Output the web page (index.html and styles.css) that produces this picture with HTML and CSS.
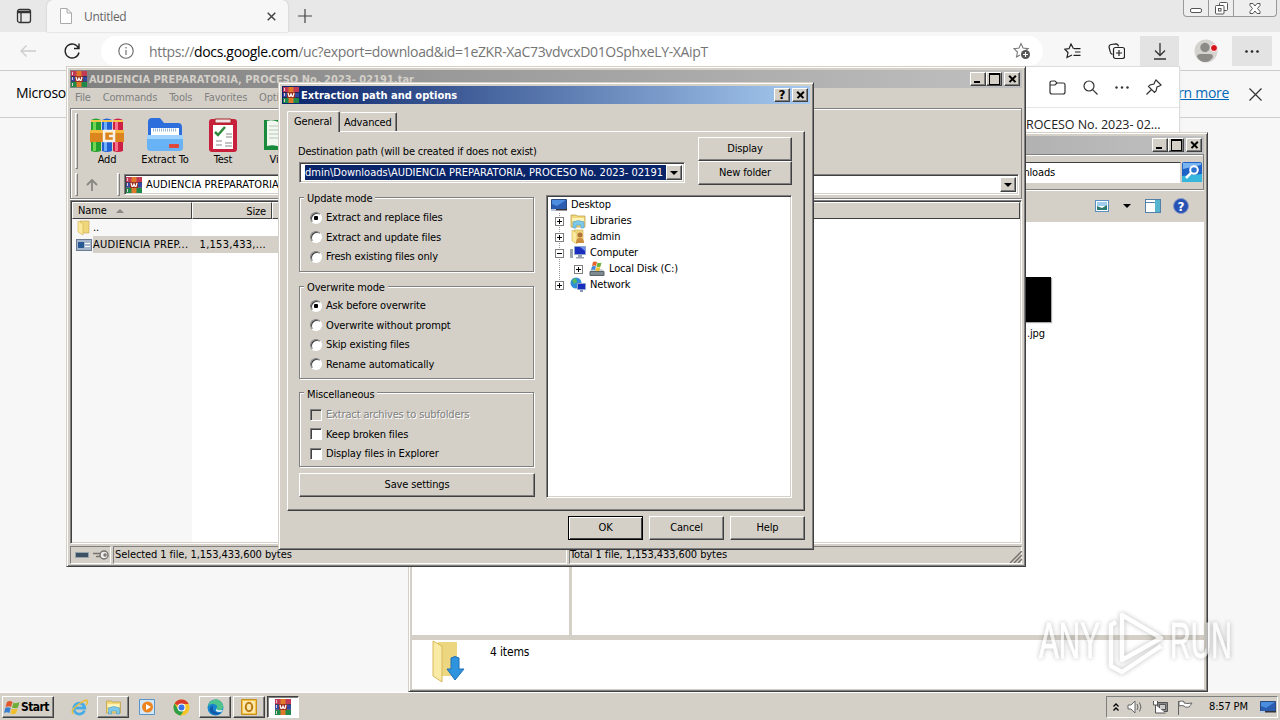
FILE: index.html
```html
<!DOCTYPE html>
<html lang="en">
<head>
    <meta charset="UTF-8">
    <title>Desktop</title>
    <link rel="stylesheet" href="styles.css">
</head>
<body>
    <svg width="0" height="0" class="defs">
        <symbol id="rar" viewBox="0 0 16 16">
            <path fill="#c23a55" d="M0 0h16v5H0z"/>
            <path fill="#3348a0" d="M0 5.500h16v5H0z"/>
            <path fill="#1f8a4a" d="M0 11h16v5H0z"/>
            <path fill="#2c1c30" d="M0 5h16v.7H0zM0 10.400h16v.7H0z"/>
            <path fill="#e07a28" d="M5.500 0h5v16h-5z"/>
            <path fill="#9c3020" d="M4 5h8v6H4z"/>
            <path fill="none" stroke="#fff" stroke-width="1.200" d="M5 6l1 3.500h1L8 7l1 2.500h1L11 6"/>
            <path fill="#e8c8d0" d="M1 1h1v3H1zM1 6h1v3H1zM1 12h1v3H1z"/>
        </symbol>
        <symbol id="folder" viewBox="0 0 16 16">
            <path fill="#efd77c" stroke="#c9a545" stroke-width=".6" d="M4 1h9v12H4z"/>
            <path fill="#fbe99c" stroke="#d3b04e" stroke-width=".6" d="M2 1l5 3v11l-5-3z"/>
        </symbol>
        <symbol id="lib" viewBox="0 0 16 16">
            <path fill="#f2d878" stroke="#b99a44" stroke-width=".7" d="M1 2h5l1 1h8v11H1z"/>
            <path fill="#fff4b8" d="M2 5h12v3H2z"/>
            <path fill="#7ec9ea" stroke="#4d9fc9" stroke-width=".6" d="M3 15V9q5-3 11 0v6h-3v-3H6v3z"/>
        </symbol>
        <symbol id="desk" viewBox="0 0 16 16">
            <path fill="#2a5cb0" stroke="#2b4a80" d="M.5 2.500h15v10H.5z"/>
            <path fill="#4b8ee0" d="M1 3h14L6 9l-5-2z"/>
            <path fill="#b9cbe0" d="M0 12h5v2H0z"/>
            <path fill="#333" d="M5 12h11v1.500H5z"/>
        </symbol>
        <symbol id="drop" viewBox="0 0 8 4"><path d="M0 0h8L4 4z"/></symbol>
    </svg>

    <!-- browser -->
    <div class="browser">
        <div class="tabbar">
            <div class="tab-actions">
                <svg width="16" height="16" fill="none" stroke="#333" stroke-width="1.300"><rect x="1.500" y="1.500" width="13" height="13" rx="2"/><path d="M2 4h12" stroke-width="2.500"/><path d="M5 5v9"/></svg>
            </div>
            <div class="tab">
                <svg width="12" height="16" fill="#fff" stroke="#aaa"><path d="M.5.5h6.500l4.500 4.500v10.500H.5zM7 .5V5h4.500"/></svg>
                <span>Untitled</span>
                <svg width="9" height="9" stroke="#444" stroke-width="1.500"><path d="M.7.7l7.600 7.600M8.300.7L.7 8.300"/></svg>
            </div>
            <svg class="newtab" width="14" height="14" stroke="#444" stroke-width="1.200"><path d="M7 0v14M0 7h14"/></svg>
            <div class="winbtns">
                <span><svg width="12" height="6" fill="#fff" stroke="#555"><rect x=".5" y="1.500" width="11" height="4" rx="1.500"/></svg></span>
                <span><svg width="13" height="13" fill="#fff" stroke="#555"><rect x="4.500" y=".5" width="8" height="8" rx="1"/><rect x=".5" y="3.500" width="8.500" height="8.500" rx="1"/><rect x="3.500" y="6.500" width="2.500" height="2.500"/></svg></span>
                <span><svg width="12" height="11" fill="#fff" stroke="#555"><path d="M1 .5h3l2 2.500 2-2.500h3v2L8.500 5.500 11 8.500v2H8L6 8l-2 2.500H1v-2l2.500-3L1 2.500z"/></svg></span>
            </div>
        </div>
        <div class="navbar">
            <svg class="back" width="16" height="12" fill="none" stroke="#ccc" stroke-width="1.300"><path d="M16 6H1M6.500.5L1 6l5.500 5.500"/></svg>
            <svg class="reload" width="18" height="17" fill="none" stroke="#222" stroke-width="1.400"><path d="M14.500 5A7 7 0 1 0 15 9.500M15 .5V5.500h-5"/></svg>
            <div class="address">
                <svg width="16" height="16" fill="none" stroke="#666" stroke-width="1.100"><circle cx="8" cy="8" r="7.200"/><path d="M8 7v5M8 4v1.500"/></svg>
                <span class="url">https://<b>docs.google.com</b>/uc?export=download&amp;id=1eZKR-XaC73vdvcxD01OSphxeLY-XAipT</span>
                <svg width="18" height="18" fill="none" stroke="#777" stroke-width="1.100"><path d="M7 13l-3.500 2 1-5L1 6.700l5-.6L8 1.500l2.100 4.600 5 .6L12 9"/><circle cx="12.500" cy="12.500" r="4.500" fill="#555" stroke="none"/><path stroke="#fff" d="M12.500 10v5M10 12.500h5"/></svg>
            </div>
            <div class="nav-icons">
                <svg width="17" height="17" fill="none" stroke="#222" stroke-width="1.200"><path d="M9.500 5.700L7 1 5 5.700.8 6.200 4 9.500l-1 5L8 12M10 5.700h6.500M11 9h5.500M9.500 12.300h7"/></svg>
                <svg width="17" height="17" fill="none" stroke="#222" stroke-width="1.200"><path d="M4.500 11.500Q2.500 11 2 8L1 4q0-2 2-2.500L8 .8q2 0 2.500 2.500"/><rect x="5.500" y="4.500" width="11" height="11" rx="2"/><path d="M11 7v6M8 10h6"/></svg>
                <div class="hot"><svg width="14" height="17" fill="none" stroke="#333" stroke-width="1.300"><path d="M7 0v12M2 7.500l5 5 5-5M1 16h12"/></svg></div>
                <svg width="24" height="24"><circle cx="12" cy="12" r="11.500" fill="#d5d3d0"/><circle cx="11" cy="8.500" r="4.700" fill="#8d8b88"/><path fill="#8d8b88" d="M3 18q0-3 3-3h10q3 0 3 3-3 5-8 5t-8-5"/><circle cx="20" cy="9" r="3.500" fill="#d8121b" stroke="#fff"/></svg>
                <div class="hot more"><svg width="14" height="3" fill="#222"><circle cx="1.500" cy="1.500" r="1.300"/><circle cx="7" cy="1.500" r="1.300"/><circle cx="12.500" cy="1.500" r="1.300"/></svg></div>
            </div>
        </div>
        <div class="infobar">
            <span class="ms">Microsoft Edge</span>
            <a class="learn">Learn more</a>
            <svg width="13" height="13" stroke="#333" stroke-width="1.200"><path d="M.5.5l12 12M12.500.5l-12 12"/></svg>
        </div>
    </div>

    <!-- downloads flyout -->
    <div class="flyout">
        <div class="flyout-head">
            <svg width="17" height="15" fill="none" stroke="#333" stroke-width="1.200"><path d="M1 12V3q0-2 2-2h3l2 2h6q2 0 2 2v7q0 2-2 2H3q-2 0-2-2M1 5h5l2-2"/></svg>
            <svg width="15" height="15" fill="none" stroke="#333" stroke-width="1.200"><circle cx="6" cy="6" r="5"/><path d="M9.700 9.700l4.800 4.800"/></svg>
            <svg width="14" height="3" fill="#333"><circle cx="1.500" cy="1.500" r="1.200"/><circle cx="7" cy="1.500" r="1.200"/><circle cx="12.500" cy="1.500" r="1.200"/></svg>
            <svg width="16" height="16" fill="none" stroke="#333" stroke-width="1.200"><path d="M10 1l5 5-1.500 1L11 8l-1 4-1.500 1.500-6-6L4 6l4-1 1-2.500zM5.500 10.500L.5 15.500"/></svg>
        </div>
        <div class="flyout-item">ROCESO No. 2023- 02...</div>
    </div>

    <!-- explorer window -->
    <div class="window explorer">
        <div class="titlebar inactive">
            <div class="capbtns"><i class="cap min"></i><i class="cap max"></i><i class="cap close"></i></div>
        </div>
        <div class="ex-search">
            <div class="ex-field">Search Downloads</div>
            <svg width="20" height="20"><rect width="20" height="20" rx="2" fill="#1e62c8"/><path fill="#36b6dd" d="M0 14l20-2v8H0z"/><path fill="#7ab5f0" d="M1 1h18v2L1 7z"/><circle cx="12" cy="8" r="3.800" fill="#2a73d0" stroke="#fff" stroke-width="2"/><path stroke="#fff" stroke-width="2.500" d="M9 11l-5 5"/></svg>
        </div>
        <div class="ex-tools">
            <svg width="14" height="12"><rect x=".5" y=".5" width="13" height="11" fill="#fff" stroke="#5a8fc0"/><path fill="#9fcdee" d="M2 2h10v4H2z"/><path fill="#2e7a71" d="M2 6l5 2 5-3v5H2z"/></svg>
            <svg width="8" height="4"><use href="#drop"/></svg>
            <svg width="16" height="14"><rect x=".5" y=".5" width="15" height="13" fill="#fff" stroke="#5580a8"/><path fill="#55b5cf" d="M10 1h5v12h-5z"/><path stroke="#5580a8" d="M1 3.500h9"/></svg>
            <svg width="16" height="16"><circle cx="8" cy="8" r="7.500" fill="#2851b4" stroke="#8798c8"/><text x="8" y="12.500" text-anchor="middle" class="help-q">?</text></svg>
        </div>
        <div class="ex-body">
            <div class="ex-nav"></div>
            <div class="ex-files">
                <div class="thumb"></div>
                <div class="fname">.jpg</div>
            </div>
        </div>
        <div class="ex-details">
            <svg width="38" height="44"><path fill="#ecd67f" d="M8 2h19v34H8z"/><path fill="#f9eaa5" stroke="#d8b75a" d="M3 1l9 5v36l-9-6z"/><path fill="#2f94dd" stroke="#1c70b8" d="M21 18q4-3 8 0v11h5l-9 11-8-11h4z"/></svg>
            <span>4 items</span>
        </div>
    </div>

    <!-- archive window -->
    <div class="window archiver">
        <div class="titlebar inactive">
            <svg width="16" height="16"><use href="#rar"/></svg>
            <span>AUDIENCIA PREPARATORIA, PROCESO No. 2023- 02191.tar</span>
            <div class="capbtns"><i class="cap min"></i><i class="cap max"></i><i class="cap close"></i></div>
        </div>
        <div class="menu"><span>File</span><span>Commands</span><span>Tools</span><span>Favorites</span><span>Options</span></div>
        <div class="bars">
            <div class="bar tools">
                <i class="grip"></i>
                <div class="tool"><svg width="36" height="36">
                    <path fill="#24a02f" d="M2 3q5-3 10 0v31q-5 2-10 0z"/><path fill="#73d653" d="M4 3h3v31H4z"/>
                    <path fill="#1f62d6" d="M13 3q5-3 10 0v31q-5 2-10 0z"/><path fill="#6fb1f8" d="M15 3h3v31h-3z"/>
                    <path fill="#cf1e43" d="M24 3q5-3 10 0v31q-5 2-10 0z"/><path fill="#f4738c" d="M26 3h3v31h-3z"/>
                    <path fill="#f5c64a" d="M2 3h10v2H2zM13 3h10v2H13zM24 3h10v2H24z"/>
                    <path fill="#dc841d" d="M1 13h34v12H1z"/><path fill="#f6b93d" d="M1 13h34v3H1z"/>
                    <path fill="none" stroke="#f6f0e6" stroke-width="2.500" d="M15 14h10v10H15zM20 19h6"/></svg>Add</div>
                <div class="tool"><svg width="38" height="36">
                    <path fill="#2c6fdc" d="M2 5q0-4 4-4h8l4 5h14q4 0 4 4v20H2z"/><path fill="#fff" d="M5 11h28v10H5z"/><path stroke="#9db8d8" stroke-dasharray="1 1" stroke-width="3" d="M7 13h24"/>
                    <path fill="#68b2f6" d="M1 18h36v13q0 3-4 3H5q-4 0-4-3z"/><path fill="#9fd2ff" d="M1 18h36v4H1z"/><rect x="23" y="27" width="10" height="4" rx="1" fill="#e0483c"/></svg>Extract To</div>
                <div class="tool"><svg width="30" height="36">
                    <rect x="1" y="2" width="28" height="33" rx="3" fill="#c8203c"/><path fill="#fff" d="M5 8h20v24H5z"/><path fill="#f0e4e8" stroke="#a22" d="M7 2h16v4H7z"/>
                    <path fill="none" stroke="#2c8a3c" stroke-width="2.500" d="M7 15l3 3 7-8"/><path stroke="#888" stroke-width="1.200" d="M18 17h6M18 20h6M8 24h6M8 28h6M17 26h7M17 29h7"/></svg>Test</div>
                <div class="tool"><svg width="34" height="36">
                    <path fill="#178a3c" d="M0 3h34v30H0z"/><path fill="#f2f7f0" d="M3 4q7-2 13 2v24q-6-3-13-1zM31 4q-7-2-13 2v24q6-3 13-1z"/><path stroke="#b6c6b8" d="M5 9h9M5 13h9M5 17h9M5 21h9"/></svg>View</div>
            </div>
            <div class="bar path">
                <i class="grip"></i>
                <svg class="up" width="12" height="12" fill="none" stroke="#8a8680" stroke-width="1.800"><path d="M6 12V1M1 6l5-5 5 5"/></svg>
                <i class="grip"></i>
                <div class="combo">
                    <svg width="16" height="16"><use href="#rar"/></svg>
                    <span>AUDIENCIA PREPARATORIA, PROCESO No. 2023- 02191.tar</span>
                    <i class="dropbtn"><svg width="8" height="4"><use href="#drop"/></svg></i>
                </div>
            </div>
        </div>
        <div class="list">
            <div class="list-head">
                <span class="c-name">Name <svg width="8" height="4" fill="#8a8680"><path d="M0 4h8L4 0z"/></svg></span>
                <span class="c-size">Size</span>
                <span class="c-rest"></span>
            </div>
            <div class="list-body">
                <div class="list-row"><span class="c-name"><svg width="16" height="16"><use href="#folder"/></svg>..</span></div>
                <div class="list-row sel"><span class="c-name"><svg width="16" height="14"><rect x=".5" y="1.500" width="15" height="11" fill="#a8b8cc" stroke="#6a7a90"/><path fill="#2a5a94" d="M2 4h6v6H2z"/><path stroke="#fff" d="M9 5.500h5M9 8.500h5"/></svg><em>AUDIENCIA PREP...</em></span><span class="c-size">1,153,433,...</span></div>
            </div>
        </div>
        <div class="status">
            <div class="s-icons">
                <svg width="14" height="6"><path fill="#3c5264" stroke="#96a4ae" d="M.5.500h13v5H.5z"/></svg>
                <svg width="17" height="10" fill="none" stroke="#77736e" stroke-width="1.500"><circle cx="12" cy="5" r="4" fill="#eee"/><circle cx="13" cy="5" r="1"/><path d="M8 3.500H1M8 6.500H4"/></svg>
            </div>
            <div class="s-left">Selected 1 file, 1,153,433,600 bytes</div>
            <div class="s-right">Total 1 file, 1,153,433,600 bytes</div>
            <svg class="sizer" width="12" height="12" stroke="#77736c" stroke-width="1.500"><path d="M0 12L12 0M4 12l8-8M8 12l4-4"/></svg>
        </div>
    </div>

    <!-- extraction dialog -->
    <div class="window dialog">
        <div class="titlebar active">
            <svg width="16" height="16"><use href="#rar"/></svg>
            <span>Extraction path and options</span>
            <div class="capbtns"><i class="cap ask">?</i><i class="cap close"></i></div>
        </div>
        <div class="tabs"><span class="on">General</span><span>Advanced</span></div>
        <div class="panel">
            <div class="dest">
                <div class="dest-left">
                    <label>Destination path (will be created if does not exist)</label>
                    <div class="combo">
                        <span class="picked">dmin\Downloads\AUDIENCIA PREPARATORIA, PROCESO No. 2023- 02191</span>
                        <i class="dropbtn"><svg width="8" height="4"><use href="#drop"/></svg></i>
                    </div>
                </div>
                <div class="dest-right">
                    <div class="btn">Display</div>
                    <div class="btn">New folder</div>
                </div>
            </div>
            <div class="main">
                <div class="options">
                    <div class="group g-update">
                        <h4>Update mode</h4>
                        <p><i class="radio on"></i>Extract and replace files</p>
                        <p><i class="radio"></i>Extract and update files</p>
                        <p><i class="radio"></i>Fresh existing files only</p>
                    </div>
                    <div class="group g-over">
                        <h4>Overwrite mode</h4>
                        <p><i class="radio on"></i>Ask before overwrite</p>
                        <p><i class="radio"></i>Overwrite without prompt</p>
                        <p><i class="radio"></i>Skip existing files</p>
                        <p><i class="radio"></i>Rename automatically</p>
                    </div>
                    <div class="group g-misc">
                        <h4>Miscellaneous</h4>
                        <p class="off"><i class="check"></i>Extract archives to subfolders</p>
                        <p><i class="check"></i>Keep broken files</p>
                        <p><i class="check"></i>Display files in Explorer</p>
                    </div>
                    <div class="btn">Save settings</div>
                </div>
                <div class="tree">
                    <div class="node"><svg width="16" height="16"><use href="#desk"/></svg>Desktop</div>
                    <div class="branch">
                        <div class="node l1"><i class="exp plus"></i><svg width="16" height="16"><use href="#lib"/></svg>Libraries</div>
                        <div class="node l1"><i class="exp plus"></i><svg width="16" height="16"><use href="#folder"/><circle cx="10" cy="6" r="2.500" fill="#b0713a"/><path fill="#c98b3e" d="M6 14q0-5 4-5t4 5z"/></svg>admin</div>
                        <div class="node l1"><i class="exp"></i><svg width="16" height="16"><path fill="#9aa4ae" d="M0 4h3v9H0z"/><path fill="#1a2fc0" stroke="#8fa4c8" d="M4.500 1.500h11v8h-11z"/><path fill="#6d8cf0" d="M10 2h5v4z"/><path fill="#98a2b0" d="M8 10h4v2h2v1.500H6V12h2z"/></svg>Computer</div>
                        <div class="node l2"><i class="exp plus"></i><svg width="16" height="16"><path fill="#7f8a90" stroke="#56646c" d="M1 10.500h14v4H1z"/><path fill="#c8d2d6" d="M2 8h11l2 2H1z"/><path fill="#e2642a" d="M4 1q2-1 4 0L7 5q-2-1-4 0z"/><path fill="#6cb33a" d="M8.500 1.500q2 1 4 0l-1 4q-2 1-4 0z"/><path fill="#3f86d8" d="M3 5.500q2-1 4 0L6 9q-2-1-4 0z"/><path fill="#f0c030" d="M7.500 6q2 1 4 0l-1 3.500q-2 1-4 0z"/></svg>Local Disk (C:)</div>
                        <div class="node l1"><i class="exp plus"></i><svg width="16" height="16"><circle cx="6" cy="6" r="5.500" fill="#2e8fd8"/><path fill="#55bb60" d="M2 3l4-2 1 4-3 2zM7 7l4-1-2 4z"/><path fill="#1530c0" stroke="#8fa4c8" d="M7.500 6.500h8v6h-8z"/><path fill="#8898b8" d="M10 13h3v2h-3z"/></svg>Network</div>
                    </div>
                </div>
            </div>
        </div>
        <div class="dlg-btns"><div class="btn default">OK</div><div class="btn">Cancel</div><div class="btn">Help</div></div>
    </div>

    <!-- taskbar -->
    <div class="taskbar">
        <div class="start">
            <svg width="16" height="15"><path fill="#e0562a" d="M3 2q3-2 5.500 0L7 7Q5 5.500 1.500 7z"/><path fill="#6fae36" d="M9.500 2.500Q12 4 15.500 2L14 7.500Q11 9 8 7.500z"/><path fill="#3a7fd0" d="M1.200 8Q4 6.500 6.700 8L5.500 13Q3 11.500 0 13z"/><path fill="#efc02c" d="M7.700 8.500Q10.500 10 13.700 8.500L12 13.500Q9 15 6.500 13.500z"/></svg>
            Start
        </div>
        <div class="quick">
            <span><svg width="17" height="17" fill="none"><path stroke="#4aace4" stroke-width="2.800" d="M13.500 11.500A5.500 5.500 0 1 1 13.800 9H4"/><path stroke="#e8bf3c" stroke-width="1.500" d="M2 15Q-1 11 8 5t8-3q1 2-1 4"/></svg></span>
            <span class="task"><svg width="17" height="16"><use href="#lib"/></svg></span>
            <span><svg width="16" height="16"><path fill="#d4e7f6" stroke="#5b94c4" d="M.5.5h15v15H.5z"/><circle cx="8.500" cy="8" r="5.500" fill="#ee8420"/><path fill="#fff" d="M7 5l5 3-5 3z"/></svg></span>
            <span><svg width="17" height="17"><circle cx="8.500" cy="8.500" r="8" fill="#f5c428"/><path fill="#d93a2c" d="M8.500 8.500L1.600 4.500a8 8 0 0 1 14 .5H8.500z"/><path fill="#2f9e48" d="M1.600 4.500a8 8 0 0 0 6 12l3.500-5.500H5.500z"/><circle cx="8.500" cy="8.500" r="4" fill="#fff"/><circle cx="8.500" cy="8.500" r="3" fill="#3a74e8"/></svg></span>
            <span class="task"><svg width="17" height="17"><circle cx="8.500" cy="8.500" r="8" fill="#1786cf"/><path fill="#4fc48c" d="M3 3q7-6 12 1 3 5-1 7-3 1-5-1 3-4-2-5-4-1-6 3 0-3 2-5"/><path fill="#1458a8" d="M6 7q-2 7 8 7-4 3-8 1T3 9q1-2 3-2"/><path fill="#e8f4f8" d="M9 10q2 2 6 1l1 1q-4 2-7 0z"/></svg></span>
            <span class="task"><svg width="17" height="17"><path fill="#f3c346" stroke="#c98f1d" d="M.5.5h15v15H.5z"/><path fill="#fbe7ac" d="M2 2h12v12H2z"/><ellipse cx="8" cy="8" rx="3.200" ry="4.200" fill="none" stroke="#b87a10" stroke-width="2"/></svg></span>
            <span class="task down"><svg width="16" height="16"><use href="#rar"/></svg></span>
        </div>
        <div class="tray">
            <svg width="6" height="9" fill="none" stroke="#000" stroke-width="1.300"><path d="M.5 3.500L3 1l2.500 2.500M.5 7.500L3 5l2.500 2.500"/></svg>
            <svg width="17" height="14" fill="#fff" stroke="#666"><path d="M1 5h3l4-4v12L4 9H1z"/><path fill="none" d="M10 4q2 3 0 6M12.500 2.500q3 4.500 0 9"/></svg>
            <svg width="17" height="15" fill="#fff" stroke="#555"><path fill="#888" d="M5.500 2.500h10v9h-10z"/><path fill="#ccc" d="M7.500 4.500h6v5h-6z"/><path d="M1.500 1v4h4V1M3.500 5v8h10"/></svg>
            <svg width="16" height="15" fill="#fff" stroke="#666"><path d="M1.500 15V1M2 1.500q3-1 5 0V3q4 1 8 0-2 3-3 4-4 1-5-1-2-1-5 0z"/></svg>
            <span>8:57 PM</span>
            <svg width="16" height="16"><use href="#desk"/></svg>
        </div>
    </div>

    <svg class="watermark" width="220" height="76">
        <text x="7" y="52" textLength="61" lengthAdjust="spacingAndGlyphs">ANY</text>
        <text x="138" y="52" textLength="62" lengthAdjust="spacingAndGlyphs">RUN</text>
        <path d="M90 9v45l39-22zM84 16l-5 3v41l11 6 39-26"/>
    </svg>
</body>
</html>
```
FILE: styles.css
```css
* {
    box-sizing: border-box;
}

body {
    margin: 0;
    width: 1280px;
    height: 720px;
    overflow: hidden;
    position: relative;
    background: #f7f7f7;
    color: #000;
    font: 11px/14px "DejaVu Sans Condensed", "DejaVu Sans", sans-serif;
    letter-spacing: -0.15px;
    white-space: nowrap;
}

svg {
    flex: none;
    display: block;
}

.defs {
    position: absolute;
}

i, em {
    font-style: normal;
}

/* browser */
.tabbar {
    display: flex;
    height: 32px;
    background: #e8e8e8;
}

.tab-actions {
    width: 47px;
    padding: 8px 0 0 16px;
}

.tab {
    width: 241px;
    background: #f7f7f7;
    border-radius: 6px 6px 0 0;
    box-shadow: 0 0 2px #bbb;
    display: flex;
    align-items: center;
    padding: 0 12px 0 13px;
    font: 12px "Open Sans", sans-serif;
    letter-spacing: -0.3px;
    color: #666;
}

.tab span {
    flex: 1;
    margin-left: 12px;
}

.newtab {
    margin: 9px 0 0 10px;
}

.winbtns {
    margin: 0 3px 0 auto;
    display: flex;
    width: 94px;
    height: 17px;
    border: 1px solid #999;
    border-top: 0;
    border-radius: 0 0 4px 4px;
    background: #eee;
}

.winbtns span {
    width: 25px;
    display: flex;
    align-items: center;
    justify-content: center;
    border-right: 1px solid #999;
}

.winbtns span:first-child {
    align-items: flex-end;
    padding-bottom: 3px;
}

.winbtns span:last-child {
    flex: 1;
    border: 0;
}

.navbar {
    display: flex;
    align-items: center;
    height: 39px;
    border-bottom: 1px solid #ccc;
}

.back {
    margin-left: 20px;
}

.reload {
    margin-left: 28px;
}

.address {
    width: 942px;
    height: 30px;
    margin-left: 19px;
    border-radius: 15px;
    background: #fff;
    display: flex;
    align-items: center;
    padding: 0 12px 0 17px;
}

.url {
    flex: 1;
    margin-left: 15px;
    color: #757575;
    font: 14px "Open Sans", sans-serif;
    letter-spacing: -0.34px;
}

.url b {
    font-weight: normal;
    color: #000;
}

.nav-icons {
    display: flex;
    align-items: center;
    margin-left: 21px;
    gap: 15px;
}

.nav-icons svg + svg {
    margin-left: 12px;
}

.hot {
    width: 39px;
    height: 30px;
    background: #e3e3e3;
    display: flex;
    align-items: center;
    justify-content: center;
}

.more {
    width: 40px;
    margin-left: -1px;
}

.infobar {
    height: 47px;
    border-bottom: 1px solid #ccc;
    display: flex;
    align-items: center;
    padding: 0 18px 0 16px;
    font: 14px "Open Sans", sans-serif;
    letter-spacing: -0.3px;
}

.infobar span,
.infobar a {
    margin-bottom: 3px;
}

.learn {
    margin-left: auto;
    margin-right: 20px;
    color: #0067b8;
    text-decoration: underline;
}

/* downloads flyout */
.flyout {
    position: absolute;
    left: 900px;
    top: 66px;
    width: 280px;
    height: 80px;
    background: #fff;
    border: 1px solid #ddd;
    box-shadow: 0 1px 2px #e5e5e5;
}

.flyout-head {
    height: 41px;
    display: flex;
    align-items: center;
    justify-content: flex-end;
    gap: 17px;
    padding-right: 17px;
    border-bottom: 1px solid #e5e5e5;
}

.flyout-item {
    margin: 8px 0 0 125px;
    font: 12.5px "Open Sans", sans-serif;
    letter-spacing: -0.05px;
    color: #222;
}

/* classic windows */
.window {
    position: absolute;
    background: #d4d0c8;
    border: 1px solid;
    border-color: #d4d0c8 #404040 #404040 #d4d0c8;
    box-shadow: inset 1px 1px #fff, inset -1px -1px #808080;
    padding: 3px;
}

.titlebar {
    height: 18px;
    display: flex;
    align-items: center;
    padding: 0 2px 0 1px;
    font: bold 11px/18px "DejaVu Sans Condensed", "DejaVu Sans", sans-serif;
    letter-spacing: 0.02px;
}

.titlebar span {
    margin-left: 2px;
    padding-top: 1px;
}

.inactive {
    background: linear-gradient(90deg, #808080, #c0c0c0);
    color: #d4d0c8;
}

.active {
    background: linear-gradient(90deg, #0a246a, #a6caf0);
    color: #fff;
}

.capbtns {
    display: flex;
    margin-left: auto;
}

.cap {
    width: 16px;
    height: 14px;
    background: #d4d0c8;
    border: 1px solid;
    border-color: #fff #404040 #404040 #fff;
    box-shadow: inset -1px -1px #808080;
    display: flex;
    align-items: center;
    justify-content: center;
    color: #000;
    font: bold 12px "DejaVu Sans", sans-serif;
}

.cap.close {
    margin-left: 2px;
}

.min::before {
    content: "";
    width: 6px;
    height: 2px;
    margin: 6px 2px 0 0;
    background: #000;
}

.max::before {
    content: "";
    width: 9px;
    height: 9px;
    border: 1px solid #000;
    border-top-width: 2px;
}

.cap.close::before,
.cap.close::after {
    content: "";
    width: 9px;
    height: 1.5px;
    margin: 0 -4.5px;
    background: #000;
    transform: rotate(45deg);
}

.cap.close::after {
    transform: rotate(-45deg);
}

.btn {
    height: 24px;
    background: #d4d0c8;
    border: 1px solid;
    border-color: #fff #404040 #404040 #fff;
    box-shadow: inset -1px -1px #808080;
    display: flex;
    align-items: center;
    justify-content: center;
}

.combo {
    display: flex;
    align-items: center;
    height: 21px;
    background: #fff;
    border: 1px solid;
    border-color: #808080 #fff #fff #808080;
    box-shadow: inset 1px 1px #404040, inset -1px -1px #d4d0c8;
    padding: 2px;
}

.dropbtn {
    width: 16px;
    height: 100%;
    margin-left: auto;
    background: #d4d0c8;
    border: 1px solid;
    border-color: #fff #404040 #404040 #fff;
    box-shadow: inset -1px -1px #808080;
    display: flex;
    align-items: center;
    justify-content: center;
}

/* explorer */
.explorer {
    left: 408px;
    top: 132px;
    width: 800px;
    height: 560px;
}

.ex-search {
    display: flex;
    align-items: center;
    justify-content: flex-end;
    gap: 1px;
    height: 36px;
    padding-right: 1px;
    border: 1px solid #808080;
    border-left: 0;
    box-shadow: inset 0 1px #fff, 0 1px #fff;
}

.ex-field {
    width: 220px;
    height: 21px;
    line-height: 19px;
    padding-left: 4px;
    background: #fff;
    border: 1px solid;
    border-color: #404040 #d4d0c8 #fff #808080;
}

.ex-tools {
    display: flex;
    align-items: center;
    justify-content: flex-end;
    height: 32px;
    padding-right: 15px;
}

.ex-tools svg + svg {
    margin-left: 14px;
}

.ex-tools svg:last-child {
    margin-left: 12px;
}

.help-q {
    font: bold 12px "DejaVu Sans", sans-serif;
    fill: #fff;
}

.ex-body {
    display: flex;
    height: 413px;
}

.ex-nav {
    width: 160px;
    background: #fff;
    border-right: 3px solid #d4d0c8;
}

.ex-nav,
.ex-files {
    flex: none;
}

.ex-files {
    width: 632px;
    background: #fff;
    padding: 55px 0 0 433px;
}

.thumb {
    width: 46px;
    height: 45px;
    background: #000;
    box-shadow: 1px 1px 1px #aaa;
}

.fname {
    margin: 5px 0 0 22px;
}

.ex-details {
    height: 49px;
    margin-top: 5px;
    background: #fff;
    display: flex;
    padding-left: 18px;
}

.ex-details span {
    margin: 5px 0 0 22px;
    font-size: 12px;
}

/* archive window */
.archiver {
    left: 66px;
    top: 66px;
    width: 960px;
    height: 501px;
}

.menu {
    height: 20px;
    display: flex;
    gap: 12px;
    align-items: center;
    padding-left: 5px;
    letter-spacing: -0.2px;
    color: #808080;
}

.bars {
    height: 91px;
    border: 1px solid #808080;
    box-shadow: inset 1px 1px #fff, 0 1px #fff;
}

.bar {
    display: flex;
    padding-left: 4px;
}

.grip {
    width: 3px;
    border: 1px solid;
    border-color: #fff #808080 #808080 #fff;
}

.tools {
    height: 62px;
}

.tools .grip {
    margin: 4px 0 2px;
}

.tool {
    width: 58px;
    padding-top: 8px;
    display: flex;
    flex-direction: column;
    align-items: center;
}

.path {
    height: 27px;
    align-items: center;
}

.path .grip {
    height: 23px;
}

.up {
    margin: 0 19px 0 8px;
}

.path .combo {
    flex: 1;
    margin: 0 2px 0 4px;
    padding-left: 1px;
    letter-spacing: 0.05px;
}

.path .combo span {
    margin-left: 4px;
}

.list {
    margin-top: 1px;
    height: 344px;
    border: 1px solid;
    border-color: #808080 #fff #fff #808080;
    box-shadow: inset 1px 1px #404040;
    padding: 1px 1px 0;
}

.list-head {
    display: flex;
    height: 17px;
    line-height: 17px;
}

.list-head span {
    background: #d4d0c8;
    border: 1px solid;
    border-color: #fff #404040 #404040 #fff;
    padding: 0 5px;
}

.c-name {
    width: 120px;
    display: flex;
    align-items: center;
    flex: none;
}

.list-head .c-name svg {
    margin-left: 9px;
}

.c-size {
    width: 80px;
    text-align: right;
    flex: none;
}

.c-rest {
    flex: 1;
}

.list-body {
    height: 323px;
    background: linear-gradient(90deg, #f7f7f7 120px, #fff 120px);
}

.list-row {
    display: flex;
    height: 17px;
    align-items: center;
    padding-left: 4px;
}

.list-row .c-name {
    width: 116px;
}

.list-row .c-name svg {
    margin-right: 1px;
}

.sel {
    letter-spacing: 0.27px;
}

.sel em {
    background: #d4d0c8;
    flex: 1;
    line-height: 17px;
}

.sel .c-size {
    width: 90px;
    background: #d4d0c8;
    line-height: 17px;
    padding-right: 16px;
}

.status {
    display: flex;
    gap: 2px;
    height: 18px;
    margin-top: 2px;
    line-height: 15px;
    letter-spacing: -0.08px;
    position: relative;
}

.status > div {
    border: 1px solid;
    border-color: #808080 #fff #fff #808080;
}

.s-icons {
    width: 41px;
    display: flex;
    align-items: center;
    gap: 3px;
    padding-left: 4px;
}

.s-left {
    width: 454px;
    padding-left: 1px;
}

.s-right {
    flex: 1;
}

.sizer {
    position: absolute;
    right: 0;
    bottom: 1px;
}

/* extraction dialog */
.dialog {
    left: 278px;
    top: 82px;
    width: 536px;
    height: 468px;
}

.tabs {
    display: flex;
    align-items: flex-end;
    height: 27px;
    padding-left: 5px;
}

.tabs span {
    height: 19px;
    width: 57px;
    padding: 3px 0 0 3px;
    border: 1px solid;
    border-color: #fff #404040 transparent transparent;
    border-bottom: 0;
    border-radius: 2px 2px 0 0;
    box-shadow: inset -1px 0 #808080;
}

.tabs .on {
    height: 21px;
    width: 53px;
    padding: 3px 0 0 6px;
    border-left-color: #fff;
    margin-bottom: -1px;
    background: #d4d0c8;
    position: relative;
}

.panel {
    width: 518px;
    height: 380px;
    margin-left: 5px;
    border: 1px solid;
    border-color: #fff #404040 #404040 #fff;
    box-shadow: inset -1px -1px #808080;
    padding: 5px 12px 0 11px;
}

.dest {
    display: flex;
    justify-content: space-between;
}

.dest-left {
    width: 386px;
    padding-top: 8px;
}

.dest-left label {
    display: block;
    height: 17px;
    margin-left: -1px;
    letter-spacing: -0.18px;
}

.picked {
    background: #0a246a;
    color: #fff;
    width: 361px;
    margin-left: 3px;
    line-height: 15px;
    letter-spacing: 0;
    overflow: hidden;
}

.dest-right {
    width: 94px;
}

.main {
    display: flex;
    gap: 11px;
    margin-top: 10px;
}

.options {
    width: 236px;
    padding-top: 2px;
}

.group {
    border: 1px solid #808080;
    box-shadow: 1px 1px #fff, inset 1px 1px #fff;
    padding-left: 10px;
    margin: 0 1px 14px 0;
}

.g-update {
    height: 75px;
}

.g-over {
    height: 93px;
    margin-bottom: 13px;
}

.g-misc {
    height: 75px;
    margin-bottom: 6px;
}

.group h4 {
    margin: -7px 0 2px -6px;
    width: max-content;
    padding: 0 3px;
    font-weight: normal;
    line-height: 15px;
    background: #d4d0c8;
}

.group p {
    margin: 0;
    height: 19.5px;
    display: flex;
    align-items: center;
    line-height: 19px;
}

.g-over h4 {
    margin-bottom: 1px;
}

.g-misc h4 {
    margin: -6px 0 3px -6px;
}

.radio,
.check {
    width: 12px;
    height: 12px;
    margin-right: 4px;
    background: #fff;
    border: 1px solid;
    border-color: #808080 #fff #fff #808080;
    box-shadow: inset 1px 1px #404040;
}

.radio {
    border-radius: 50%;
}

.radio.on {
    background: radial-gradient(#000 2px, #fff 2.5px);
}

.off {
    color: #808080;
    text-shadow: 1px 1px #fff;
}

.off .check {
    background: #d4d0c8;
}

.tree {
    width: 246px;
    height: 303px;
    background: #fff;
    border: 1px solid;
    border-color: #808080 #fff #fff #808080;
    box-shadow: inset 1px 1px #404040, inset -1px -1px #d4d0c8;
    padding: 1px 0 0 4px;
}

.branch {
    background: linear-gradient(#fff, #fff) 0 72px / 20px 20px no-repeat, repeating-linear-gradient(#999 0 1px, #fff 1px 2px) 8px 0 / 1px 72px no-repeat;
}

.node {
    display: flex;
    align-items: center;
    height: 16px;
}

.node svg {
    margin-right: 4px;
}

.l1 {
    padding-left: 4px;
}

.l2 {
    padding-left: 23px;
}

.exp {
    width: 9px;
    height: 9px;
    border: 1px solid #808080;
    margin-right: 6px;
    background: linear-gradient(#000, #000) center / 5px 1px no-repeat, #fff;
    box-shadow: 2px 0 0 -1px #fff;
}

.exp.plus {
    background: linear-gradient(#000, #000) center / 5px 1px no-repeat, linear-gradient(#000, #000) center / 1px 5px no-repeat, #fff;
}

.dlg-btns {
    display: flex;
    justify-content: flex-end;
    gap: 6px;
    margin: 5px 5px 0 0;
}

.dlg-btns .btn {
    width: 75px;
}

.btn.default {
    border-color: #000;
    box-shadow: inset 1px 1px #fff, inset -1px -1px #404040;
}

/* taskbar */
.taskbar {
    position: absolute;
    left: 0;
    top: 692px;
    width: 1280px;
    height: 28px;
    background: #d4d0c8;
    box-shadow: inset 0 1px #fff;
    display: flex;
    align-items: center;
    padding: 3px 2px 1px;
}

.start {
    width: 52px;
    height: 22px;
    display: flex;
    align-items: center;
    gap: 1px;
    padding-left: 1px;
    border: 1px solid;
    border-color: #fff #404040 #404040 #fff;
    box-shadow: inset -1px -1px #808080;
    font: bold 12px "DejaVu Sans Condensed", "DejaVu Sans", sans-serif;
    letter-spacing: -0.6px;
}

.quick {
    display: flex;
    gap: 2px;
    margin-left: 9px;
}

.quick span {
    width: 32px;
    height: 22px;
    display: flex;
    align-items: center;
    justify-content: center;
}

.quick .task {
    border: 1px solid;
    border-color: #fff #404040 #404040 #fff;
    box-shadow: inset -1px -1px #808080;
}

.quick .down {
    background: #fff;
    border-color: #404040 #fff #fff #404040;
    box-shadow: inset 1px 1px #808080;
}

.tray {
    width: 172px;
    height: 22px;
    margin-left: auto;
    border: 1px solid;
    border-color: #808080 #fff #fff #808080;
    display: flex;
    align-items: center;
    gap: 8px;
    padding: 0 0 0 6px;
}

.tray span {
    margin: 0 4px 0 8px;
}

.watermark {
    position: absolute;
    left: 1032px;
    top: 606px;
    filter: drop-shadow(0 0 2.5px rgba(0, 0, 0, 0.45));
    opacity: 0.6;
}

.watermark text {
    font: 50px "Liberation Sans", sans-serif;
    letter-spacing: 0;
    fill: #fff;
    stroke: #fff;
}

.watermark path {
    fill: none;
    stroke: #fff;
    stroke-width: 4.5;
    stroke-linejoin: round;
}
```
